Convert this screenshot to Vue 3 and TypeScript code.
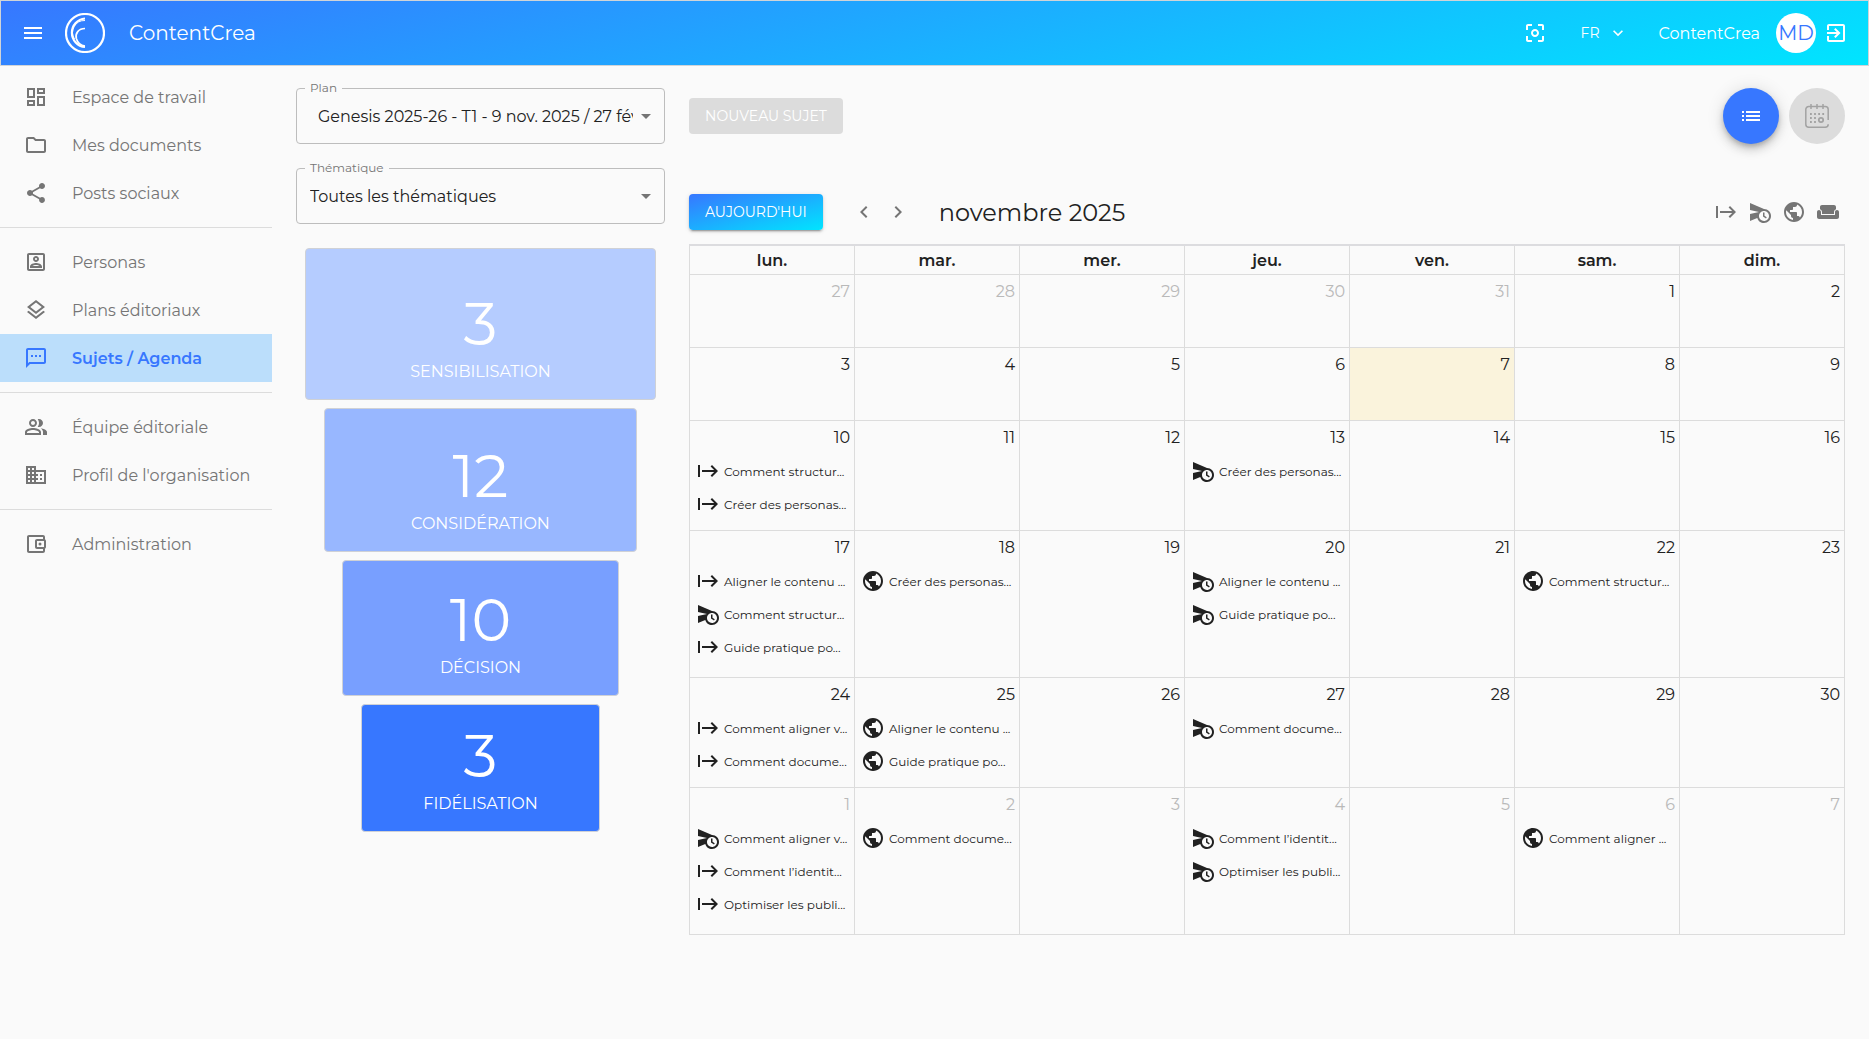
<script setup lang="ts">
import { ref } from 'vue'

type EventKind = 'start' | 'send' | 'web'
interface CalEvent { kind: EventKind; title: string }
interface Day { n: number; other?: boolean; today?: boolean; events: CalEvent[] }

const icons: Record<string, string> = {
  menu: 'M3 18h18v-2H3v2zm0-5h18v-2H3v2zm0-7v2h18V6H3z',
  dashboard: 'M19 5v2h-4V5h4M9 5v6H5V5h4m10 8v6h-4v-6h4M9 17v2H5v-2h4M21 3h-8v6h8V3zM11 3H3v10h8V3zm10 8h-8v10h8V11zm-10 4H3v6h8v-6z',
  folder: 'M9.17 6l2 2H20v10H4V6h5.17M10 4H4c-1.1 0-1.99.9-1.99 2L2 18c0 1.1.9 2 2 2h16c1.1 0 2-.9 2-2V8c0-1.1-.9-2-2-2h-8l-2-2z',
  share: 'M18 16.08c-.76 0-1.44.3-1.96.77L8.91 12.7c.05-.23.09-.46.09-.7s-.04-.47-.09-.7l7.05-4.11c.54.5 1.25.81 2.04.81 1.66 0 3-1.34 3-3s-1.34-3-3-3-3 1.34-3 3c0 .24.04.47.09.7L8.04 9.81C7.5 9.31 6.79 9 6 9c-1.66 0-3 1.34-3 3s1.34 3 3 3c.79 0 1.5-.31 2.04-.81l7.12 4.16c-.05.21-.08.43-.08.65 0 1.61 1.31 2.92 2.92 2.92 1.61 0 2.92-1.31 2.92-2.92s-1.31-2.92-2.92-2.92z',
  persona: 'M19 5v14H5V5h14m0-2H5c-1.11 0-2 .9-2 2v14c0 1.1.89 2 2 2h14c1.1 0 2-.9 2-2V5c0-1.1-.9-2-2-2zm-7 9c-1.65 0-3-1.35-3-3s1.35-3 3-3 3 1.35 3 3-1.35 3-3 3zm0-4c-.55 0-1 .45-1 1s.45 1 1 1 1-.45 1-1-.45-1-1-1zm6 10H6v-1.53c0-2.5 3.97-3.58 6-3.58s6 1.08 6 3.58V18zm-9.69-2h7.38c-.69-.56-2.38-1.12-3.69-1.12s-3.01.56-3.69 1.12z',
  layers: 'M11.99 18.54l-7.37-5.73L3 14.07l9 7 9-7-1.63-1.27-7.38 5.74zM12 16l7.36-5.73L21 9l-9-7-9 7 1.63 1.27L12 16zm0-11.47L17.74 9 12 13.47 6.26 9 12 4.53z',
  sms: 'M20 2H4c-1.1 0-2 .9-2 2v18l4-4h14c1.1 0 2-.9 2-2V4c0-1.1-.9-2-2-2zm0 14H5.17L4 17.17V4h16v12zM7 9h2v2H7zm8 0h2v2h-2zm-4 0h2v2h-2z',
  people: 'M16.67 13.13C18.04 14.06 19 15.32 19 17v3h4v-3c0-2.18-3.57-3.47-6.33-3.87zM15 12c2.21 0 4-1.79 4-4s-1.79-4-4-4c-.47 0-.91.1-1.33.24C14.5 5.27 15 6.58 15 8s-.5 2.73-1.33 3.76c.42.14.86.24 1.33.24zM9 12c2.21 0 4-1.79 4-4s-1.79-4-4-4-4 1.79-4 4 1.79 4 4 4zm0-6c1.1 0 2 .9 2 2s-.9 2-2 2-2-.9-2-2 .9-2 2-2zm0 7c-2.67 0-8 1.34-8 4v3h16v-3c0-2.66-5.33-4-8-4zm6 5H3v-.99C3.2 16.29 6.3 15 9 15s5.8 1.29 6 2v1z',
  business: 'M12 7V3H2v18h20V7H12zM6 19H4v-2h2v2zm0-4H4v-2h2v2zm0-4H4V9h2v2zm0-4H4V5h2v2zm4 12H8v-2h2v2zm0-4H8v-2h2v2zm0-4H8V9h2v2zm0-4H8V5h2v2zm10 12h-8v-2h2v-2h-2v-2h2v-2h-2V9h8v10zm-2-8h-2v2h2v-2zm0 4h-2v2h2v-2z',
  wallet: 'M21 7.28V5c0-1.1-.9-2-2-2H5c-1.11 0-2 .9-2 2v14c0 1.1.89 2 2 2h14c1.1 0 2-.9 2-2v-2.28c.59-.35 1-.98 1-1.72V9c0-.74-.41-1.37-1-1.72zM20 9v6h-7V9h7zM5 19V5h14v2h-6c-1.1 0-2 .9-2 2v6c0 1.1.9 2 2 2h6v2H5zM16 10.5a1.5 1.5 0 1 0 0 3a1.5 1.5 0 1 0 0-3z',
  focus: 'M12 8c-2.21 0-4 1.79-4 4s1.79 4 4 4 4-1.79 4-4-1.79-4-4-4zm0 6c-1.1 0-2-.9-2-2s.9-2 2-2 2 .9 2 2-.9 2-2 2zm-7 1H3v4c0 1.1.9 2 2 2h4v-2H5v-4zM5 5h4V3H5c-1.1 0-2 .9-2 2v4h2V5zm14-2h-4v2h4v4h2V5c0-1.1-.9-2-2-2zm0 16h-4v2h4c1.1 0 2-.9 2-2v-4h-2v4z',
  down: 'M7.41 8.59L12 13.17l4.59-4.58L18 10l-6 6-6-6 1.41-1.41z',
  exit: 'M10.09 15.59L11.5 17l5-5-5-5-1.41 1.41L12.67 11H3v2h9.67l-2.58 2.59zM19 3H5c-1.11 0-2 .9-2 2v4h2V5h14v14H5v-4H3v4c0 1.1.89 2 2 2h14c1.1 0 2-.9 2-2V5c0-1.1-.9-2-2-2z',
  list: 'M3 13h2v-2H3v2zm0 4h2v-2H3v2zm0-8h2V7H3v2zm4 4h14v-2H7v2zm0 4h14v-2H7v2zM7 7v2h14V7H7z',
  start: 'M14.59 7.41 18.17 11H6v2h12.17l-3.59 3.59L16 18l6-6-6-6-1.41 1.41zM2 6v12h2V6H2z',
  send: 'M16.5 12.5H15v4l3 2 .75-1.23-2.25-1.52V12.5zM16 9 2 3v7l9 2-9 2v7l7.27-3.11C10.09 20.83 12.79 23 16 23c3.86 0 7-3.14 7-7s-3.14-7-7-7zm0 12c-2.75 0-4.98-2.22-5-4.97v-.07c.02-2.74 2.25-4.97 5-4.97 2.76 0 5 2.24 5 5S18.76 21 16 21z',
  web: 'M12 2C6.48 2 2 6.48 2 12s4.48 10 10 10 10-4.48 10-10S17.52 2 12 2zm-1 17.93c-3.95-.49-7-3.85-7-7.93 0-.62.08-1.21.21-1.79L9 15v1c0 1.1.9 2 2 2v1.93zm6.9-2.54c-.26-.81-1-1.39-1.9-1.39h-1v-3c0-.55-.45-1-1-1H8v-2h2c.55 0 1-.45 1-1V7h2c1.1 0 2-.9 2-2v-.41c2.93 1.19 5 4.06 5 7.41 0 2.08-.8 3.97-2.1 5.39z',
  weekend: 'M21 10c-1.1 0-2 .9-2 2v3H5v-3c0-1.1-.9-2-2-2s-2 .9-2 2v5c0 1.1.9 2 2 2h18c1.1 0 2-.9 2-2v-5c0-1.1-.9-2-2-2zm-3-5H6c-1.1 0-2 .9-2 2v2.15c1.16.41 2 1.51 2 2.82V14h12v-2.03c0-1.3.84-2.4 2-2.82V7c0-1.1-.9-2-2-2z',
  left: 'M15.41 7.41L14 6l-6 6 6 6 1.41-1.41L10.83 12z',
  right: 'M10 6L8.59 7.41 13.17 12l-4.58 4.59L10 18l6-6z',
  drop: 'M7 10l5 5 5-5z',
}

const nav = [
  [
    { icon: 'dashboard', label: 'Espace de travail' },
    { icon: 'folder', label: 'Mes documents' },
    { icon: 'share', label: 'Posts sociaux' },
  ],
  [
    { icon: 'persona', label: 'Personas' },
    { icon: 'layers', label: 'Plans éditoriaux' },
    { icon: 'sms', label: 'Sujets / Agenda', active: true },
  ],
  [
    { icon: 'people', label: 'Équipe éditoriale' },
    { icon: 'business', label: "Profil de l'organisation" },
  ],
  [{ icon: 'wallet', label: 'Administration' }],
]

const plan = ref('Genesis 2025-26 - T1 - 9 nov. 2025 / 27 févr. 2026')
const theme = ref('Toutes les thématiques')

const funnel = [
  { count: 3, label: 'SENSIBILISATION', cls: 'awareness' },
  { count: 12, label: 'CONSIDÉRATION', cls: 'consideration' },
  { count: 10, label: 'DÉCISION', cls: 'decision' },
  { count: 3, label: 'FIDÉLISATION', cls: 'loyalty' },
]

const weekdays = ['lun.', 'mar.', 'mer.', 'jeu.', 'ven.', 'sam.', 'dim.']

const e = (kind: EventKind, title: string): CalEvent => ({ kind, title })
const scheduled: Record<string, CalEvent[]> = {
  '11-10': [e('start', 'Comment structur...'), e('start', 'Créer des personas...')],
  '11-13': [e('send', 'Créer des personas...')],
  '11-17': [e('start', 'Aligner le contenu ...'), e('send', 'Comment structur...'), e('start', 'Guide pratique po...')],
  '11-18': [e('web', 'Créer des personas...')],
  '11-20': [e('send', 'Aligner le contenu ...'), e('send', 'Guide pratique po...')],
  '11-22': [e('web', 'Comment structur...')],
  '11-24': [e('start', 'Comment aligner v...'), e('start', 'Comment docume...')],
  '11-25': [e('web', 'Aligner le contenu ...'), e('web', 'Guide pratique po...')],
  '11-27': [e('send', 'Comment docume...')],
  '12-1': [e('send', 'Comment aligner v...'), e('start', 'Comment l’identit...'), e('start', 'Optimiser les publi...')],
  '12-2': [e('web', 'Comment docume...')],
  '12-4': [e('send', 'Comment l’identit...'), e('send', 'Optimiser les publi...')],
  '12-6': [e('web', 'Comment aligner ...')],
}

// Six weeks starting on Monday 27 October 2025
const weeks: Day[][] = Array.from({ length: 6 }, (_, w) =>
  Array.from({ length: 7 }, (_, d) => {
    const date = new Date(2025, 9, 27 + w * 7 + d)
    const month = date.getMonth() + 1
    const n = date.getDate()
    return { n, other: month !== 11, today: month === 11 && n === 7, events: scheduled[`${month}-${n}`] ?? [] }
  }),
)

const weekClass = (week: Day[]) => `rows-${Math.max(...week.map((d) => d.events.length))}`
</script>

<template>
  <div class="app">
    <header class="topbar">
      <button class="icon-btn" aria-label="Menu"><svg class="ico" viewBox="0 0 24 24"><path :d="icons.menu" /></svg></button>
      <svg class="logo" viewBox="0 0 40 40" fill="none" stroke="currentColor">
        <circle cx="20" cy="20" r="19" stroke-width="2.2" />
        <path d="M20 5.500A14.300 14.300 0 0 0 20 34" stroke-width="2.200" />
        <path d="M20 7.500A12 12 0 0 0 9.500 26" stroke-width="1" />
        <path d="M20 15.500C13.500 15.500 10 20.500 11.300 25.500C12.600 30 16 32.500 20 33" stroke-width="1.700" />
      </svg>
      <span class="brand">ContentCrea</span>
      <div class="account">
        <button class="icon-btn" aria-label="Focus"><svg class="ico" viewBox="0 0 24 24"><path :d="icons.focus" /></svg></button>
        <button class="lang">FR<svg class="ico small" viewBox="0 0 24 24"><path :d="icons.down" /></svg></button>
        <span class="user">ContentCrea</span>
        <span class="avatar">MD</span>
        <button class="icon-btn" aria-label="Déconnexion"><svg class="ico" viewBox="0 0 24 24"><path :d="icons.exit" /></svg></button>
      </div>
    </header>

    <div class="body">
      <nav class="sidebar">
        <ul v-for="(group, g) in nav" :key="g" class="group">
          <li v-for="item in group" :key="item.label">
            <a href="#" class="nav-item" :class="{ active: item.active }">
              <svg class="ico" viewBox="0 0 24 24"><path :d="icons[item.icon]" /></svg>
              <span>{{ item.label }}</span>
            </a>
          </li>
        </ul>
      </nav>

      <section class="filters">
        <div class="field">
          <label for="plan">Plan</label>
          <select id="plan" v-model="plan" class="indented"><option>{{ plan }}</option></select>
          <svg class="ico arrow" viewBox="0 0 24 24"><path :d="icons.drop" /></svg>
        </div>
        <div class="field">
          <label for="theme">Thématique</label>
          <select id="theme" v-model="theme"><option>{{ theme }}</option></select>
          <svg class="ico arrow" viewBox="0 0 24 24"><path :d="icons.drop" /></svg>
        </div>
        <div class="funnel">
          <div v-for="step in funnel" :key="step.label" class="step" :class="step.cls">
            <strong>{{ step.count }}</strong>
            <span>{{ step.label }}</span>
          </div>
        </div>
      </section>

      <main class="agenda">
        <div class="actions">
          <button class="btn" disabled>NOUVEAU SUJET</button>
          <div class="views">
            <button class="fab" aria-label="Liste"><svg class="ico" viewBox="0 0 24 24"><path :d="icons.list" /></svg></button>
            <button class="fab" disabled aria-label="Calendrier">
              <svg class="cal" viewBox="0 0 24 24" fill="none" stroke="currentColor">
                <path d="M23.200 16V5.500a3 3 0 0 0-3-3H3.800a3 3 0 0 0-3 3v14.700a3 3 0 0 0 3 3h16.400a3 3 0 0 0 3-3" stroke-width="1.500" />
                <path d="M6 0v5M12 0v5M18 0v5" stroke-width="1.500" />
                <path d="M5 10h14.500M5 14h6.500M5 18h6.500" stroke-width="1.800" stroke-dasharray="1.800 2.300" />
                <circle cx="16" cy="16" r="2.200" stroke-width="1.700" />
              </svg>
            </button>
          </div>
        </div>

        <div class="toolbar">
          <button class="btn today-btn">AUJOURD'HUI</button>
          <div class="arrows">
            <button class="icon-btn" aria-label="Mois précédent"><svg class="ico" viewBox="0 0 24 24"><path :d="icons.left" /></svg></button>
            <button class="icon-btn" aria-label="Mois suivant"><svg class="ico" viewBox="0 0 24 24"><path :d="icons.right" /></svg></button>
          </div>
          <h2>novembre 2025</h2>
          <div class="toggles">
            <button v-for="k in ['start', 'send', 'web', 'weekend']" :key="k" class="icon-btn" :aria-label="k">
              <svg class="ico" viewBox="0 0 24 24"><path :d="icons[k]" /></svg>
            </button>
          </div>
        </div>

        <table class="calendar">
          <thead>
            <tr><th v-for="d in weekdays" :key="d" scope="col">{{ d }}</th></tr>
          </thead>
          <tbody>
            <tr v-for="(week, w) in weeks" :key="w" :class="weekClass(week)">
              <td v-for="day in week" :key="day.n" :class="{ other: day.other, today: day.today }">
                <div class="num">{{ day.n }}</div>
                <a v-for="ev in day.events" :key="ev.title" href="#" class="event">
                  <svg class="ico" viewBox="0 0 24 24"><path :d="icons[ev.kind]" /></svg>
                  <span>{{ ev.title }}</span>
                </a>
              </td>
            </tr>
          </tbody>
        </table>
      </main>
    </div>
  </div>
</template>

<style>
body {
  margin: 0;
  background: #fafafa;
}
</style>

<style scoped>
.app {
  min-height: 100vh;
  font-family: Montserrat, Inter, 'Open Sans', sans-serif;
  font-size: 16px;
  color: #212121;
  background: #fafafa;
}
.app * {
  box-sizing: border-box;
}
button,
select {
  font: inherit;
  color: inherit;
  margin: 0;
  border: 0;
  background: none;
}
a {
  color: inherit;
  text-decoration: none;
}
.ico {
  display: block;
  flex: none;
  width: 24px;
  height: 24px;
  fill: currentColor;
}
.icon-btn {
  padding: 0;
}

.topbar {
  display: flex;
  align-items: center;
  height: 66px;
  padding: 0 20px;
  border: 1px solid #d0d4d8;
  color: #fff;
  background: linear-gradient(165deg, #3777ff, #00e5ff);
}
.logo {
  width: 40px;
  height: 40px;
  margin-left: 20px;
}
.brand {
  margin-left: 24px;
  font-size: 20px;
}
.account {
  display: flex;
  align-items: center;
  margin-left: auto;
}
.lang {
  display: flex;
  align-items: center;
  gap: 8px;
  margin-left: 34px;
  padding: 0;
  font-size: 14px;
}
.ico.small {
  width: 20px;
  height: 20px;
}
.user {
  margin-left: 31px;
}
.avatar {
  display: flex;
  align-items: center;
  justify-content: center;
  width: 40px;
  height: 40px;
  margin: 0 8px 0 16px;
  border-radius: 50%;
  font-size: 20px;
  color: #3777ff;
  background: #fff;
}

.body {
  display: flex;
  align-items: flex-start;
}
.sidebar {
  flex: none;
  width: 272px;
  padding-top: 7px;
  color: #757575;
}
.group {
  margin: 0;
  padding: 0 0 10px;
  list-style: none;
}
.group + .group {
  padding-top: 10px;
  border-top: 1px solid #dcdcdc;
}
.nav-item {
  display: flex;
  align-items: center;
  gap: 24px;
  height: 48px;
  padding: 0 0 0 24px;
  white-space: nowrap;
}
.nav-item.active {
  font-weight: 600;
  color: #3777ff;
  background: #bbdefb;
}

.filters {
  flex: 0 0 369px;
  margin: 22px 24px 0;
}
.field {
  position: relative;
  height: 56px;
  margin-bottom: 24px;
  border: 1px solid #bdbdbd;
  border-radius: 4px;
}
.field label {
  position: absolute;
  top: -9px;
  left: 8px;
  padding: 0 5px;
  font-size: 12px;
  line-height: 16px;
  color: #757575;
  background: #fafafa;
}
.field select {
  appearance: none;
  width: 100%;
  height: 100%;
  padding: 0 31px 0 13px;
}
.field select.indented {
  padding-left: 21px;
}
.arrow {
  position: absolute;
  top: 15px;
  right: 6px;
  color: #757575;
  pointer-events: none;
}
.funnel {
  display: flex;
  flex-direction: column;
  align-items: center;
  gap: 8px;
}
.step {
  display: flex;
  flex-direction: column;
  align-items: center;
  justify-content: flex-end;
  padding-bottom: 15px;
  border: 1px solid #cfd1d6;
  border-radius: 4px;
  color: #fff;
}
.step strong {
  font-size: 60px;
  font-weight: 400;
  line-height: 72px;
}
.step span {
  line-height: 24px;
}
.awareness {
  width: 95%;
  height: 152px;
  background: #b5ccff;
}
.consideration {
  width: 85%;
  height: 144px;
  background: #98b7ff;
}
.decision {
  width: 75%;
  height: 136px;
  background: #789fff;
}
.loyalty {
  width: 65%;
  height: 128px;
  background: #3777ff;
}

.agenda {
  flex: 1;
  min-width: 0;
  margin: 22px 24px 0 0;
}
.actions,
.toolbar {
  display: flex;
  align-items: center;
}
.actions {
  justify-content: space-between;
}
.btn {
  height: 36px;
  padding: 0 16px;
  border-radius: 4px;
  font-size: 14px;
}
.btn:disabled {
  color: #fff;
  background: #dcdcdc;
}
.views {
  display: flex;
  gap: 10px;
}
.fab {
  display: flex;
  align-items: center;
  justify-content: center;
  width: 56px;
  height: 56px;
  padding: 0;
  border-radius: 50%;
  color: #fff;
  background: #3777ff;
  box-shadow: 0 3px 5px -1px rgba(0, 0, 0, 0.2), 0 6px 10px 0 rgba(0, 0, 0, 0.14), 0 1px 18px 0 rgba(0, 0, 0, 0.12);
}
.fab:disabled {
  color: #a2a2a2;
  background: #dcdcdc;
  box-shadow: none;
}
.cal {
  width: 24px;
  height: 24px;
}
.toolbar {
  height: 36px;
  margin: 50px 0 14px;
}
.today-btn {
  color: #fff;
  background: linear-gradient(165deg, #3777ff, #00e5ff);
  box-shadow: 0 3px 1px -2px rgba(0, 0, 0, 0.2), 0 2px 2px 0 rgba(0, 0, 0, 0.14), 0 1px 5px 0 rgba(0, 0, 0, 0.12);
}
.arrows {
  display: flex;
  gap: 10px;
  margin-left: 29px;
  color: #757575;
}
.toolbar h2 {
  margin: 0 0 0 29px;
  font-size: 24px;
  font-weight: 400;
}
.toggles {
  display: flex;
  gap: 10px;
  margin: 0 5px 0 auto;
  color: #757575;
}

.calendar {
  width: 100%;
  table-layout: fixed;
  border-collapse: collapse;
  border-top: 2px solid #dcdcdf;
}
.calendar th,
.calendar td {
  padding: 0;
  border: 1px solid #dcdcdc;
}
.calendar th {
  height: 29px;
  padding-top: 2px;
  font-weight: 600;
  line-height: 24px;
}
.calendar td {
  vertical-align: top;
}
.rows-0 {
  height: 73px;
}
.rows-2 {
  height: 110px;
}
.rows-3 {
  height: 147px;
}
.num {
  height: 34px;
  padding: 5px 4px 0;
  line-height: 24px;
  text-align: right;
}
.other .num {
  color: #b9b9b9;
}
.today {
  background: #faf3dc;
}
.event {
  display: flex;
  align-items: center;
  gap: 4px;
  height: 33px;
  padding-left: 6px;
  font-size: 12px;
  white-space: nowrap;
}
</style>
